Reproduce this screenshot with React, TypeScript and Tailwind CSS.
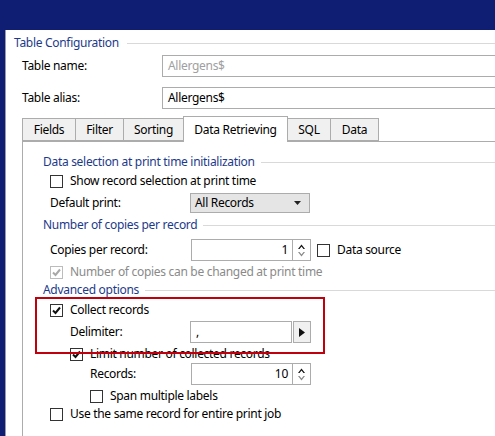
import React from "react";

const headerText = "text-[#1d3a8a]";
const border = "border-[#acacac]";

function Check({ checked, disabled }: { checked?: boolean; disabled?: boolean }) {
  return (
    <span
      className={`flex h-[13px] w-[13px] shrink-0 items-center justify-center border bg-white ${
        disabled ? "border-[#bcbcbc]" : "border-[#333333]"
      }`}
    >
      {checked && (
        <svg width="9" height="9" viewBox="0 0 9 9">
          <path
            d="M1 4.5 L3.5 7 L8 1.5"
            fill="none"
            stroke={disabled ? "#a8a8a8" : "#111"}
            strokeWidth="2"
          />
        </svg>
      )}
    </span>
  );
}

function GroupHeader({ title }: { title: string }) {
  return (
    <div className="flex h-[18px] items-center pl-[20px]">
      <span className={`${headerText} whitespace-nowrap`}>{title}</span>
      <div className="ml-[6px] h-px flex-1 bg-[#d9d9d9]" />
    </div>
  );
}

function Spinner({ value }: { value: string }) {
  return (
    <div className={`flex h-[22px] w-[120px] shrink-0 border ${border} bg-white`}>
      <div className="flex flex-1 items-center justify-end pr-[4px]">{value}</div>
      <div className={`flex w-[18px] flex-col items-center justify-center gap-[3px] border-l ${border}`}>
        <svg width="7" height="5" viewBox="0 0 7 5">
          <path d="M0 5 L3.5 0.5 L7 5 L5.5 5 L3.5 2.5 L1.5 5 Z" fill="#111" />
        </svg>
        <svg width="7" height="5" viewBox="0 0 7 5">
          <path d="M0 0 L3.5 4.5 L7 0 L5.5 0 L3.5 2.5 L1.5 0 Z" fill="#888" />
        </svg>
      </div>
    </div>
  );
}

const tabs = [
  { label: "Fields", w: 54 },
  { label: "Filter", w: 49 },
  { label: "Sorting", w: 61 },
  { label: "Data Retrieving", w: 105, active: true },
  { label: "SQL", w: 44 },
  { label: "Data", w: 49 },
];

export default function App() {
  return (
    <div
      className="relative flex h-[436px] w-[495px] flex-col overflow-hidden bg-white text-[12px] tracking-[-0.3px] text-black"
      style={{ fontFamily: '"Noto Sans", "Open Sans", sans-serif' }}
    >
      <div className="h-[30px] shrink-0 bg-[#0f1d73]" />
      <div className="flex min-w-0 flex-1">
        <div className="w-[5px] shrink-0 bg-[#0f1d73]" />
        <div className="w-px shrink-0 bg-[#9a9aa8]" />

        <div className="flex min-w-0 flex-1 flex-col">
          {/* Table Configuration */}
          <div className="mt-[4px] flex h-[18px] items-center pl-[8px]">
            <span className={`${headerText} whitespace-nowrap`}>Table Configuration</span>
            <div className="ml-[8px] h-px flex-1 bg-[#d9d9d9]" />
          </div>

          <div className="mt-[3px] flex h-[22px] items-center pl-[16px]">
            <span className="w-[140px] shrink-0">Table name:</span>
            <div className={`flex h-[22px] w-[360px] shrink-0 items-center border ${border} pl-[5px] text-[#a0a0a0]`}>
              Allergens$
            </div>
          </div>
          <div className="mt-[10px] flex h-[22px] items-center pl-[16px]">
            <span className="w-[140px] shrink-0">Table alias:</span>
            <div className={`flex h-[22px] w-[360px] shrink-0 items-center border ${border} pl-[5px]`}>
              Allergens$
            </div>
          </div>

          {/* Tabs */}
          <div className="mt-[7px] flex h-[25px] items-end pl-[16px]">
            {tabs.map((t, i) =>
              t.active ? (
                <div
                  key={t.label}
                  className={`relative z-10 -mb-px flex h-[26px] shrink-0 items-center justify-center border border-b-0 ${border} bg-white`}
                  style={{ width: t.w, marginLeft: -1 }}
                >
                  {t.label}
                </div>
              ) : (
                <div
                  key={t.label}
                  className={`flex h-[23px] shrink-0 items-center justify-center border ${border} bg-[#f0f0f0]`}
                  style={{ width: t.w, marginLeft: i === 0 ? 0 : -1 }}
                >
                  {t.label}
                </div>
              )
            )}
          </div>

          {/* Panel */}
          <div className={`ml-[16px] flex flex-1 flex-col border-l border-t ${border}`}>
            <div className="mt-[11px]">
              <GroupHeader title="Data selection at print time initialization" />
            </div>
            <div className="mt-[1px] flex h-[18px] items-center gap-[7px] pl-[27px]">
              <Check />
              <span>Show record selection at print time</span>
            </div>
            <div className="mt-[3px] flex h-[20px] items-center pl-[27px]">
              <span className="w-[140px] shrink-0">Default print:</span>
              <div className={`flex h-[20px] w-[120px] shrink-0 items-center justify-between border ${border} bg-[#e5e5e5] pl-[4px] pr-[8px]`}>
                <span>All Records</span>
                <svg width="7" height="4" viewBox="0 0 7 4">
                  <path d="M0 0 L7 0 L3.5 4 Z" fill="#222" />
                </svg>
              </div>
            </div>

            <div className="mt-[3px]">
              <GroupHeader title="Number of copies per record" />
            </div>
            <div className="mt-[5px] flex h-[22px] items-center pl-[27px]">
              <span className="w-[141px] shrink-0">Copies per record:</span>
              <Spinner value="1" />
              <div className="ml-[6px] flex items-center gap-[7px]">
                <Check />
                <span className="whitespace-nowrap">Data source</span>
              </div>
            </div>
            <div className="mt-[2px] flex h-[18px] items-center gap-[7px] pl-[27px] text-[#8a8a8a]">
              <Check checked disabled />
              <span>Number of copies can be changed at print time</span>
            </div>

            <GroupHeader title="Advanced options" />
            <div className="mt-[2px] flex h-[18px] items-center gap-[7px] pl-[27px]">
              <Check checked />
              <span>Collect records</span>
            </div>
            <div className="mt-[2px] flex h-[22px] items-center pl-[47px]">
              <span className="w-[120px] shrink-0">Delimiter:</span>
              <div className={`flex h-[22px] w-[102px] shrink-0 items-center border ${border} pl-[5px]`}>,</div>
              <div className={`ml-px flex h-[22px] w-[18px] shrink-0 items-center justify-center border ${border} bg-[#f0f0f0]`}>
                <svg width="6" height="9" viewBox="0 0 6 9">
                  <path d="M0 0 L6 4.5 L0 9 Z" fill="#111" />
                </svg>
              </div>
            </div>
            <div className="mt-[2px] flex h-[18px] items-center gap-[7px] pl-[47px]">
              <Check checked />
              <span>Limit number of collected records</span>
            </div>
            <div className="flex h-[22px] items-center pl-[67px]">
              <span className="w-[101px] shrink-0">Records:</span>
              <Spinner value="10" />
            </div>
            <div className="mt-[2px] flex h-[18px] items-center gap-[7px] pl-[67px]">
              <Check />
              <span>Span multiple labels</span>
            </div>
            <div className="flex h-[18px] items-center gap-[7px] pl-[27px]">
              <Check />
              <span>Use the same record for entire print job</span>
            </div>
          </div>
        </div>
      </div>

      {/* red highlight annotation */}
      <div className="pointer-events-none absolute left-[35px] top-[297px] h-[57px] w-[290px] border-2 border-[#c0000c]" />
    </div>
  );
}
